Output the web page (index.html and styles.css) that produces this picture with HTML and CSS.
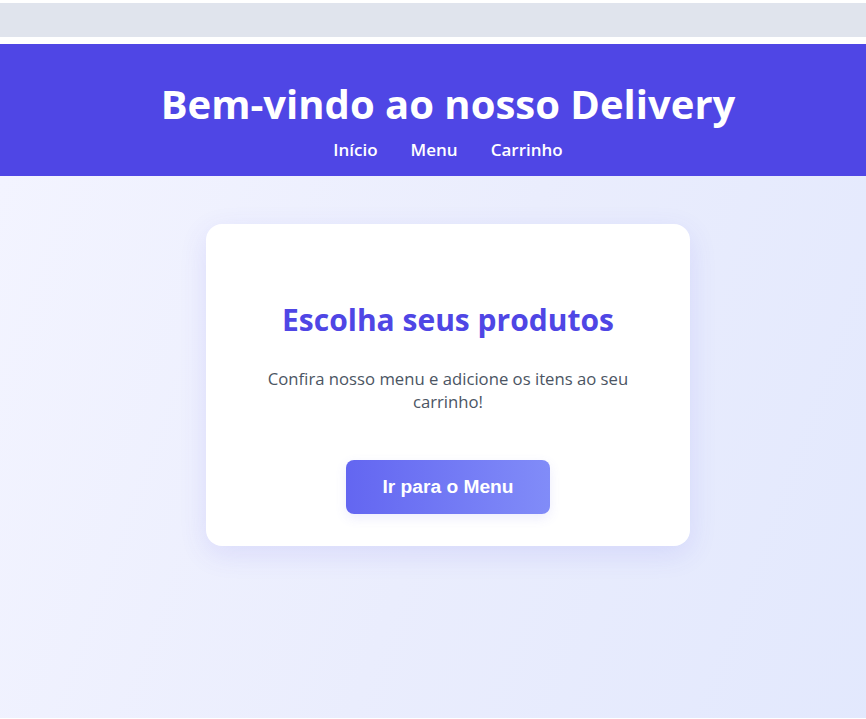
FILE: index.html
```html
<!DOCTYPE html>
<html lang="pt-BR">
<head>
<meta charset="utf-8">
<title>Delivery</title>
<link rel="stylesheet" href="styles.css">
</head>
<body>
<div class="topbar"></div>
<header class="site-header">
  <h1 class="site-title">Bem-vindo ao nosso Delivery</h1>
  <nav class="site-nav">
    <a href="#">Início</a>
    <a href="#">Menu</a>
    <a href="#">Carrinho</a>
  </nav>
</header>
<main class="main">
  <section class="card">
    <h2 class="card-title">Escolha seus produtos</h2>
    <p class="card-text">Confira nosso menu e adicione os itens ao seu carrinho!</p>
    <button class="card-btn">Ir para o Menu</button>
  </section>
</main>
</body>
</html>
```
FILE: styles.css
```css
html {
  margin: 0;
  padding: 0;
  background: #ffffff;
  overflow: hidden;
}
body {
  margin: 0;
  padding: 0;
  width: 896px;
  font-family: "Open Sans", "Noto Sans", sans-serif;
  min-height: 718px;
  display: flex;
  flex-direction: column;
}
.topbar {
  margin-top: 3px;
  height: 34px;
  background: #e0e4ed;
}
.site-header {
  margin-top: 7px;
  background: #4f46e5;
  color: #ffffff;
  text-align: center;
  height: 132px;
  box-sizing: border-box;
  padding-top: 36px;
}
.site-title {
  margin: 0;
  font-size: 40px;
  line-height: 48px;
  font-weight: 700;
}
.site-nav {
  display: flex;
  justify-content: center;
  gap: 33px;
  margin-top: 10px;
}
.site-nav a {
  color: #ffffff;
  text-decoration: none;
  font-size: 17px;
  font-weight: 600;
  line-height: 24px;
}
.main {
  flex: 1;
  background: linear-gradient(110deg, #f3f4ff 0%, #eaedfd 50%, #e2e8fd 100%);
  display: flex;
  justify-content: center;
  align-items: flex-start;
  padding-top: 48px;
}
.card {
  width: 484px;
  height: 322px;
  box-sizing: border-box;
  background: #ffffff;
  border-radius: 16px;
  box-shadow: 0 8px 28px rgba(79, 70, 229, 0.12);
  text-align: center;
  padding: 76px 56px 0;
}
.card-title {
  margin: 0;
  color: #4f46e5;
  font-size: 30px;
  line-height: 40px;
  font-weight: 700;
}
.card-text {
  margin: 27px 0 0;
  color: #4b5563;
  font-size: 16.7px;
  line-height: 23px;
}
.card-btn {
  margin-top: 47px;
  width: 204px;
  height: 54px;
  border: none;
  border-radius: 8px;
  background: linear-gradient(90deg, #6366f1, #818cf8);
  color: #ffffff;
  font-family: "Liberation Sans", Arial, sans-serif;
  font-weight: 700;
  font-size: 19.2px;
  box-shadow: 0 4px 12px rgba(99, 102, 241, 0.12);
  cursor: pointer;
}
```
